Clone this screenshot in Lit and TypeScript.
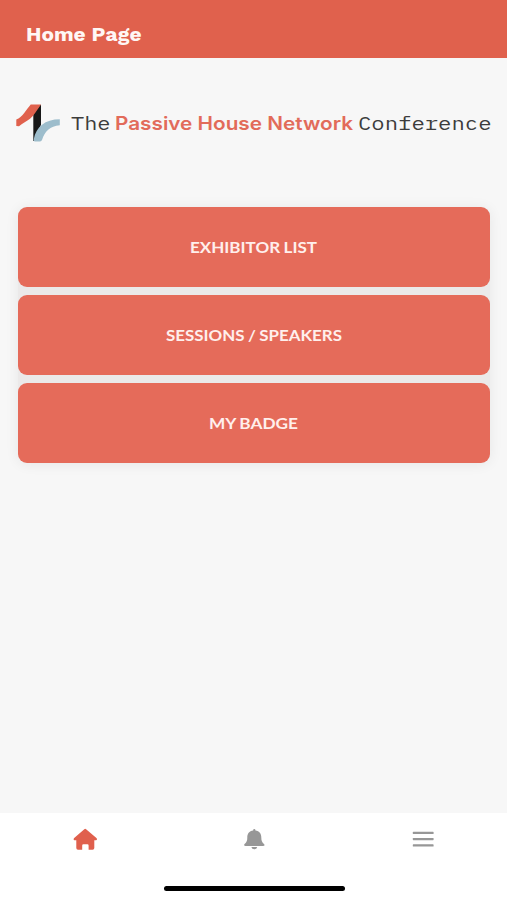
import { LitElement, html, svg, css } from "lit";
import { customElement, property } from "lit/decorators.js";

/** A line of text set to an exact measure. */
@customElement("fit-text")
export class FitText extends LitElement {
  @property() text = "";
  @property({ type: Number }) width = 100;
  @property({ type: Number }) height = 24;
  @property({ type: Number }) baseline = 18;

  static styles = css`
    :host { display: block; }
    svg { display: block; overflow: visible; }
    text { fill: currentColor; }
  `;

  render() {
    return html`<svg width=${this.width} height=${this.height}>
      ${svg`<text x="0" y=${this.baseline} textLength=${this.width} lengthAdjust="spacingAndGlyphs">${this.text}</text>`}
    </svg>`;
  }
}

@customElement("app-root")
export class AppRoot extends LitElement {
  static styles = css`
    :host {
      display: flex;
      flex-direction: column;
      height: 900px;
      background: #f7f7f7;
      font-family: Lato, "Liberation Sans", sans-serif;
    }
    header {
      box-sizing: border-box;
      height: 57.5px;
      flex: none;
      padding: 24px 0 0 26px;
      background: #e0614d;
      color: #fff7f5;
      font: 700 19.3px "Work Sans", Inter, sans-serif;
    }
    main { flex: 1; }
    .brand {
      display: flex;
      height: 149.5px;
      box-sizing: border-box;
      padding: 46.5px 0 0 16px;
    }
    .mark { width: 44px; height: 38px; margin-right: 11px; }
    .words { display: flex; padding-top: 8px; }
    .mono {
      font: 400 19.4px "IBM Plex Mono", "Liberation Mono", monospace;
      color: #3c3c3c;
    }
    .name {
      font: 600 18.3px Inter, sans-serif;
      color: #e26b5a;
      margin: 0 5px 0 4px;
    }
    .actions {
      display: flex;
      flex-direction: column;
      gap: 8.4px;
      margin: 0 17px 0 18px;
      border-radius: 9px;
      background: #ebe9e9;
      box-shadow: 0 1px 14px rgba(0, 0, 0, 0.07);
    }
    .action {
      display: flex;
      align-items: center;
      justify-content: center;
      height: 79.7px;
      padding: 0 1px 0 0;
      border: 0;
      border-radius: 9px;
      background: #e56b5a;
      color: #ffefec;
      font: 700 14.6px Lato, sans-serif;
      word-spacing: -0.6px;
    }
    nav {
      display: grid;
      grid-template-columns: repeat(3, 1fr);
      justify-items: center;
      height: 73px;
      padding-top: 14px;
      box-sizing: border-box;
      background: #fff;
    }
    nav svg { width: 26px; height: 26px; }
    .home { fill: #e0604d; }
    .grey { fill: #979797; }
    footer { height: 14px; background: #fff; padding-left: 163.5px; }
    .pill { width: 181px; height: 5.4px; border-radius: 3px; background: #000; }
  `;

  private actions = [
    { label: "EXHIBITOR LIST", width: 127 },
    { label: "SESSIONS / SPEAKERS", width: 176 },
    { label: "MY BADGE", width: 89 },
  ];

  render() {
    return html`
      <header><fit-text text="Home Page" width="115.5" baseline="17.4"></fit-text></header>
      <main>
        <div class="brand">
          <svg class="mark" viewBox="0 0 44 38">
            <path fill="#171717" d="M17.3 8L25 .4V20.5L19.2 37H17.3Z" />
            <path fill="#9dbdcc" d="M17.8 35C20 23 29 15.2 43.8 15.2V21.3C34 22 28.5 28 26.2 35.5Q25.5 37.5 24 37.5H18.8Q17.3 37.5 17.8 35Z" />
            <path fill="#e0614d" d="M.3 15.6C6.5 13 10 6 14.7.4H25C20.5 7 17.5 11.5 14 14.7C10 18 6.5 19 3 22.3L.3 22Z" />
          </svg>
          <div class="words">
            <fit-text class="mono" text="The" width="39.5" baseline="17.5"></fit-text>
            <fit-text class="name" text="Passive House Network" width="238" baseline="17.5"></fit-text>
            <fit-text class="mono" text="Conference" width="133.5" baseline="17.5"></fit-text>
          </div>
        </div>
        <div class="actions">
          ${this.actions.map(
            (a) => html`<button class="action">
              <fit-text text=${a.label} width=${a.width} height="20" baseline="15.8"></fit-text>
            </button>`
          )}
        </div>
      </main>
      <nav>
        <svg class="home" viewBox="0 0 26 26">
          <path d="M12.3 2.2Q13.2 1.4 14.1 2.2L24.7 11.2Q25.6 12.5 24.2 13.2H22.3V21Q22.3 22.7 20.6 22.7H16.6V18.5Q16.6 17.3 15.4 17.3H11.4Q10.2 17.3 10.2 18.5V22.7H6Q4.3 22.7 4.3 21V13.2H2.3Q1 12.5 1.9 11.2Z" />
        </svg>
        <svg class="grey" viewBox="0 0 26 26">
          <path d="M12.2 3Q12.2 2 13.3 2T14.4 3V3.6C18.5 4 20.3 7 20.3 10.5C20.3 14 21 15 23 17C24 18 23.3 18.9 22.3 18.9H4.3C3.3 18.9 2.6 18 3.6 17C5.6 15 6.3 14 6.3 10.5C6.3 7 8.1 4 12.2 3.6Z" />
          <path d="M10.4 20H16.2Q15.8 22.3 13.3 22.3T10.4 20Z" />
        </svg>
        <svg class="grey" viewBox="0 0 26 26">
          <rect x="2.8" y="4.8" width="20.8" height="2.2" rx=".6" />
          <rect x="2.8" y="11" width="20.8" height="2.2" rx=".6" />
          <rect x="2.8" y="17.3" width="20.8" height="2.2" rx=".6" />
        </svg>
      </nav>
      <footer><div class="pill"></div></footer>
    `;
  }
}
